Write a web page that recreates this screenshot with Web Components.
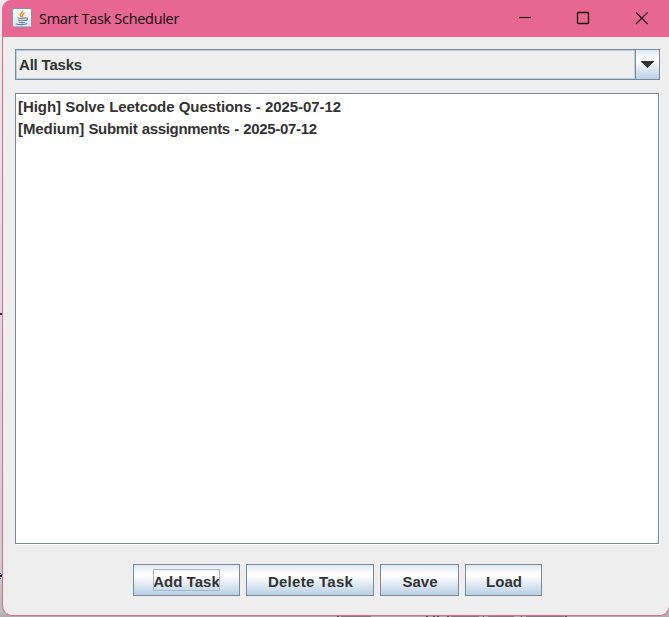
<!DOCTYPE html>
<html lang="en"><head><meta charset="utf-8"><title>Smart Task Scheduler</title>
<style>
html,body{margin:0;width:669px;height:617px;overflow:hidden}
body{background:linear-gradient(#ebecee 0,#dcdadd 300px,#cdcdcd 560px,#bbb 612px,#aaa 617px);font:bold 15px "Liberation Sans",Arial,sans-serif;color:#333}
</style></head><body>
<desktop-backdrop></desktop-backdrop>
<app-window>
 <title-bar slot="title">Smart Task Scheduler</title-bar>
 <combo-box>All Tasks</combo-box>
 <task-list>
  <task-item>[High] Solve Leetcode Questions - 2025-07-12</task-item>
  <task-item>[Medium] <span style="letter-spacing:-.32px;word-spacing:.5px">Submit assignments - 2025-07-12</span></task-item>
 </task-list>
 <button-row slot="actions">
  <metal-button focused style="width:107px">Add Task</metal-button>
  <metal-button style="width:128px;letter-spacing:.27px">Delete Task</metal-button>
  <metal-button style="width:79px">Save</metal-button>
  <metal-button style="width:77px">Load</metal-button>
 </button-row>
</app-window>
<script>
const define=(name,html)=>customElements.define(name,class extends HTMLElement{
  constructor(){super();this.attachShadow({mode:'open'}).innerHTML=html;}
});
define('desktop-backdrop',`<style>:host{position:absolute;inset:0;display:block;z-index:0}svg{display:block}</style>
<svg width="669" height="617" shape-rendering="crispEdges"><path fill="#17163c" d="M0 313h2v2H0zM0 575h2v2H0z"/><path fill="#3b72ad" d="M0 573h1v1H0zM1 574h1v1H1zM0 578h1v1H0z"/><path fill="#65434f" d="M337 616h2v1h-2zM426 616h2v1h-2zM433 616h2v1h-2zM437 616h2v1h-2zM447 616h2v1h-2zM483 616h1v1h-1zM521 616h1v1h-1zM565 616h2v1h-2z"/><path fill="#8b747b" d="M341 616h30v1h-30zM451 616h28v1h-28zM488 616h26v1h-26zM526 616h38v1h-38z"/></svg>`);
define('app-window',`<style>:host{display:flex;flex-direction:column;box-sizing:border-box;position:relative;z-index:1;width:668px;height:616px;margin-left:2px;border:1px solid #e56792;border-top:0;border-radius:9px 0 10px 10px;background:#eee;overflow:hidden}
main{display:flex;flex-direction:column;gap:13px;padding:12px 0 0 12px;width:645px}</style>
<slot name="title"></slot><main><slot></slot></main><slot name="actions"></slot>`);
define('title-bar',`<style>:host{display:flex;height:37px;background:#e56792;color:#15070d;font:14.5px "Open Sans","Noto Sans",sans-serif;letter-spacing:-.3px;align-items:center;flex:none}
.icon{margin:-1px 7px 0 9px;flex:none}.name{width:470px;line-height:34px;white-space:nowrap}.controls{display:flex;flex:none;margin-top:-1px}</style>
<svg class="icon" width="20" height="20" viewBox="0 0 20 20"><defs><linearGradient id="g" x2="0" y2="1"><stop stop-color="#fff"/><stop offset="1" stop-color="#dce1e4"/></linearGradient></defs><rect x=".5" y=".5" width="19" height="18.5" rx="1.5" fill="url(#g)" stroke="#8297a7"/><g fill="none"><path stroke="#ef8b32" stroke-width="1.5" d="M10.6 2.8c.8 2-3.1 2.5-2.4 4.4.2.7 1 1 1.2 2M12.5 5.1c-3.4 1.2-1.6 2.3-1.8 4"/><path stroke="#62839d" stroke-width="1.2" d="M5.5 9.8c2 .8 6 .8 8.5 0M6 12c2 .8 5.5.8 7.5 0M6.7 14c2 .7 4.5.7 6.3 0M13.5 10.2c3-.9 2.4 2-.2 2.5M3.8 15.8c3 1.3 9 1.2 11.5-.2"/></g></svg>
<span class="name"><slot></slot></span>
<svg class="controls" width="158" height="36" fill="none" stroke="#180910" stroke-width="1.1"><path d="M10 17.5h12"/><rect x="68.5" y="12.5" width="11" height="11" rx="1" stroke-width="1.3"/><path d="M127 12.4l11.6 11.6M138.6 12.4L127 24"/></svg>`);
define('combo-box',`<style>:host{display:flex;box-sizing:border-box;width:645px;height:31px;border:1px solid #7a8a99;color:#333;letter-spacing:-.2px}
.value{flex:1;border:1px solid #b8cfe5;line-height:28px;padding-left:2px;box-sizing:border-box}.arrow{width:23px;border-left:1px solid #7a8a99;background:linear-gradient(#dde8f3,#fff 30%,#fff 35%,#b8cfe5)}svg{display:block}</style>
<div class="value"><slot></slot></div><div class="arrow"><svg width="23" height="29" shape-rendering="crispEdges"><path d="M5 11h13l-6 7h-1z" fill="#333"/></svg></div>`);
define('task-list',`<style>:host{display:flex;flex-direction:column;box-sizing:border-box;width:644px;height:451px;background:#fff;border:1px solid #7a8a99;box-shadow:1px 1px #fff;padding:3px 2px}</style><slot></slot>`);
define('task-item',`<style>:host{display:block;height:22px;line-height:20px;white-space:nowrap;letter-spacing:-.07px;word-spacing:.2px}</style><slot></slot>`);
define('button-row',`<style>:host{display:flex;gap:6px;padding:20px 0 0 130px}</style><slot></slot>`);
define('metal-button',`<style>:host{display:flex;box-sizing:border-box;height:32px;border:1px solid #7a8a99;background:linear-gradient(#dde8f3,#fff 30%,#fff 35%,#b8cfe5);justify-content:center;align-items:center;white-space:nowrap;letter-spacing:.02px}
span{line-height:20px;height:19px;padding:3px 0 0 1px}:host([focused]) span{outline:1px solid #a3b8cc;outline-offset:-1px;padding-left:0}</style><span><slot></slot></span>`);
</script></body></html>
